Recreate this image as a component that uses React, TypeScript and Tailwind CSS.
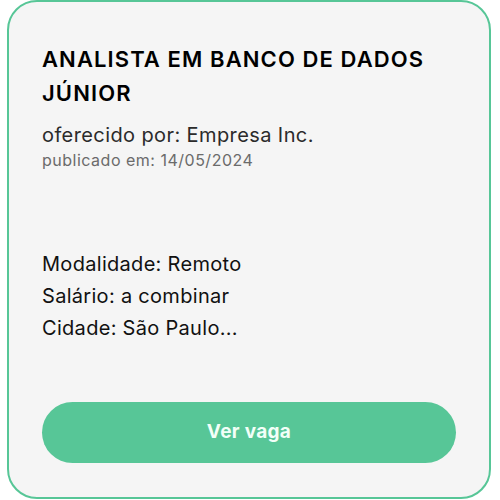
const JobCard = () => {
  return (
    <div className="flex h-[499px] w-[484px] flex-col rounded-[30px] border-2 border-[#57c697] bg-[#f5f5f5] px-[33px] pt-[40px]">
      <h1 className="text-[22px] font-semibold leading-[34px] tracking-[1.1px] text-black">
        ANALISTA EM BANCO DE DADOS JÚNIOR
      </h1>
      <p className="mt-[12px] text-[20px] leading-[26px] tracking-[0.4px] text-[#2b2b2b]">
        oferecido por: Empresa Inc.
      </p>
      <p className="mt-[2px] text-[16px] leading-[20px] tracking-[0.5px] text-[#6b6b6b]">
        publicado em: 14/05/2024
      </p>

      <div className="mt-[78px] flex flex-col text-[20px] leading-[32px] tracking-[0.3px] text-[#111]">
        <span>Modalidade: Remoto</span>
        <span>Salário: a combinar</span>
        <span>Cidade: São Paulo...</span>
      </div>

      <button className="mt-[58px] h-[61px] w-full rounded-full bg-[#57c697] text-[19px] font-bold tracking-[0.3px] text-[#f2fff8]">
        Ver vaga
      </button>
    </div>
  );
};

export default function App() {
  return (
    <div
      className="flex h-[500px] w-[500px] items-start bg-white pl-[7px]"
      style={{ fontFamily: "Inter, 'Noto Sans', sans-serif" }}
    >
      <JobCard />
    </div>
  );
}
